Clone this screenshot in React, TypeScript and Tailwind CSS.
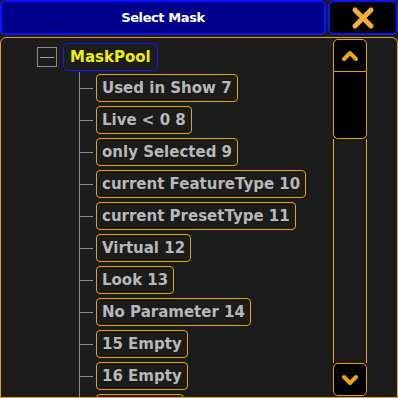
const items = [
  'Used in Show 7',
  'Live < 0 8',
  'only Selected 9',
  'current FeatureType 10',
  'current PresetType 11',
  'Virtual 12',
  'Look 13',
  'No Parameter 14',
  '15 Empty',
  '16 Empty',
]

const font = { fontFamily: '"DejaVu Sans", "Liberation Sans", sans-serif' }

function Chevron({ up }: { up?: boolean }) {
  return (
    <svg width="18" height="12" viewBox="0 0 18 12">
      <polyline
        points={up ? '3,9 9,3 15,9' : '3,3 9,9 15,3'}
        fill="none"
        stroke="#eaa60c"
        strokeWidth="4"
        strokeLinecap="round"
        strokeLinejoin="round"
      />
    </svg>
  )
}

export default function App() {
  return (
    <div className="flex h-[398px] w-[398px] flex-col overflow-hidden bg-[#1c1c1c]" style={font}>
      {/* Header */}
      <div className="flex h-[35px] gap-[2px]">
        <div className="flex w-[326px] items-center justify-center rounded-[6px] border-2 border-[#0a14ff] bg-[#00008c] text-[13px] font-bold tracking-[-0.4px] text-white">
          Select Mask
        </div>
        <div className="flex flex-1 items-center justify-center rounded-[6px] border-2 border-[#0a14ff] bg-black">
          <svg width="26" height="24" viewBox="0 0 26 24">
            <path d="M5 4 L21 20 M21 4 L5 20" stroke="#f2b133" strokeWidth="5" strokeLinecap="round" />
          </svg>
        </div>
      </div>

      {/* Panel */}
      <div className="mt-[2px] flex flex-1 overflow-hidden rounded-t-[6px] border border-[#e5a20a]">
        {/* Tree */}
        <div className="w-[332px] overflow-hidden pt-[5px]">
          <div className="flex h-[28px] items-center">
            <div className="ml-[36px] flex h-[20px] w-[20px] items-center justify-center border border-[#8a8a8a]">
              <div className="h-px w-[14px] bg-[#a0a0a0]" />
            </div>
            <div className="ml-[6px] flex h-[28px] items-center rounded-[5px] border border-[#1414ff] px-[6px] text-[15px] font-bold text-[#f0f000]">
              MaskPool
            </div>
          </div>
          <div className="ml-[78px] mt-[1px] border-l border-[#8a8a8a]">
            {items.map((item) => (
              <div key={item} className="flex h-[32px] items-center">
                <div className="h-px w-[13px] bg-[#8a8a8a]" />
                <div className="ml-[3px] flex h-[28px] items-center rounded-[4px] border border-[#e5a20a] px-[5px] text-[15px] font-bold whitespace-nowrap text-[#b8b8b8]">
                  {item}
                </div>
              </div>
            ))}
            {/* next entry, cut off by the panel edge */}
            <div className="flex h-[32px] items-center">
              <div className="h-px w-[13px] bg-[#8a8a8a]" />
              <div className="ml-[3px] h-[28px] w-[88px] rounded-[4px] border border-[#e5a20a]" />
            </div>
          </div>
        </div>

        {/* Scrollbar */}
        <div className="mt-px mb-px flex w-[34px] flex-col">
          <div className="flex h-[33px] items-center justify-center rounded-t-[5px] border border-[#e5a20a] bg-black">
            <Chevron up />
          </div>
          <div className="h-[67px] rounded-b-[5px] border-x border-b border-[#e5a20a] bg-black" />
          <div className="flex-1 border-x border-[#e5a20a]" />
          <div className="flex h-[33px] items-center justify-center rounded-[5px] border border-[#e5a20a] bg-black">
            <Chevron />
          </div>
        </div>
      </div>
    </div>
  )
}
